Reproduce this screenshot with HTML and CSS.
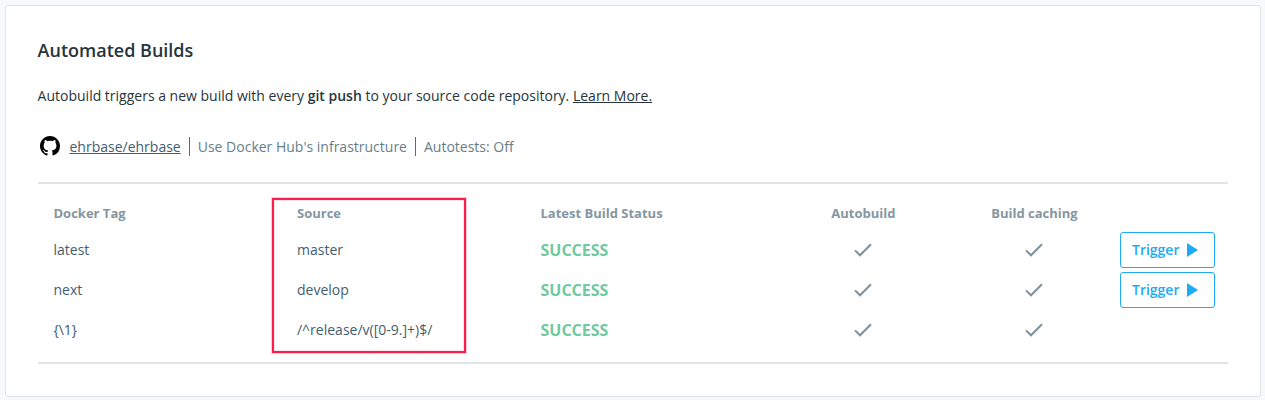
FILE: index.html
```html
<!DOCTYPE html>
<html lang="en">
<head>
<meta charset="utf-8">
<title>Automated Builds</title>
<link rel="stylesheet" href="styles.css">
</head>
<body>
<svg class="symbols" aria-hidden="true">
  <symbol id="check" viewBox="0 0 18 14"><path d="M1 7.4 L6 12.3 L17 1.2" fill="none" stroke="currentColor" stroke-width="2"/></symbol>
  <symbol id="play" viewBox="0 0 11 14"><path d="M0 0 L11 7 L0 14 Z" fill="currentColor"/></symbol>
</svg>
<main class="card">
  <h1 class="title">Automated Builds</h1>
  <p class="intro">Autobuild triggers a new build with every <strong>git push</strong> to your source code repository. <a class="learn" href="#">Learn More.</a></p>
  <div class="meta">
    <svg class="github" viewBox="0 0 16 16"><path fill="#000" d="M8 0C3.58 0 0 3.58 0 8c0 3.54 2.29 6.53 5.47 7.59.4.07.55-.17.55-.38 0-.19-.01-.82-.01-1.49-2.01.37-2.53-.49-2.69-.94-.09-.23-.48-.94-.82-1.13-.28-.15-.68-.52-.01-.53.63-.01 1.08.58 1.23.82.72 1.21 1.87.87 2.33.66.07-.52.28-.87.51-1.07-1.78-.2-3.64-.89-3.64-3.95 0-.87.31-1.59.82-2.15-.08-.2-.36-1.02.08-2.12 0 0 .67-.21 2.2.82.64-.18 1.32-.27 2-.27s1.36.09 2 .27c1.53-1.04 2.2-.82 2.2-.82.44 1.1.16 1.92.08 2.12.51.56.82 1.27.82 2.15 0 3.07-1.87 3.75-3.65 3.95.29.25.54.73.54 1.48 0 1.07-.01 1.93-.01 2.2 0 .21.15.46.55.38A8.01 8.01 0 0 0 16 8c0-4.42-3.58-8-8-8z"/></svg>
    <a class="repo" href="#">ehrbase/ehrbase</a>
    <span class="meta-item">Use Docker Hub's infrastructure</span>
    <span class="meta-item">Autotests: Off</span>
  </div>
  <section class="builds">
    <div class="row head"><span>Docker Tag</span><span>Source</span><span>Latest Build Status</span><span class="center">Autobuild</span><span class="center">Build caching</span></div>
    <div class="row"><span>latest</span><span>master</span><span class="status">SUCCESS</span><span class="center"><svg class="check"><use href="#check"/></svg></span><span class="center"><svg class="check"><use href="#check"/></svg></span><button class="trigger">Trigger<svg class="play"><use href="#play"/></svg></button></div>
    <div class="row"><span>next</span><span>develop</span><span class="status">SUCCESS</span><span class="center"><svg class="check"><use href="#check"/></svg></span><span class="center"><svg class="check"><use href="#check"/></svg></span><button class="trigger">Trigger<svg class="play"><use href="#play"/></svg></button></div>
    <div class="row"><span>{\1}</span><span>/^release/v([0-9.]+)$/</span><span class="status">SUCCESS</span><span class="center"><svg class="check"><use href="#check"/></svg></span><span class="center"><svg class="check"><use href="#check"/></svg></span></div>
    <div class="highlight"></div>
  </section>
</main>
</body>
</html>
```
FILE: styles.css
```css
* { box-sizing: border-box; }
body {
  margin: 0;
  padding: 5px 4px 3px 5px;
  height: 400px;
  overflow: hidden;
  background: #f7f8fa;
  font: 14px/20px "Open Sans", "Noto Sans", sans-serif;
  color: #27343b;
}
.symbols { display: none; }
.card {
  height: 392px;
  padding: 32px 32px 32px 31.6px;
  background: #fff;
  border: 1px solid #e0e4e7;
  border-radius: 3px;
}
.title { margin: 0; font-size: 18px; line-height: 24px; font-weight: 600; }
.intro { margin: 24px 0 0; }
.intro strong { font-weight: 600; }
.learn { color: inherit; }
.meta {
  display: flex;
  align-items: flex-start;
  height: 20px;
  margin-top: 31px;
  padding-left: 2.4px;
  color: #677e89;
}
.github { width: 20px; height: 20px; margin: -1px 9.5px 0 0; }
.repo { color: #445d6e; }
.meta-item {
  margin-left: 8px;
  padding-left: 8px;
  height: 19px;
  line-height: 20px;
  border-left: 1px solid #556f7c;
}
.builds {
  position: relative;
  height: 182px;
  margin: 25px 0 0 0.4px;
  padding: 12px 0 0 15.5px;
  border-top: 2px solid #e0e4e7;
  border-bottom: 2px solid #e0e4e7;
}
.row {
  display: grid;
  grid-template-columns: 243.5px 243.5px 237.4px 171px 171.1px 95px;
  align-items: center;
  height: 40px;
  color: #445d6e;
}
.head { height: 34px; font-size: 13px; font-weight: 700; color: #8496a2; }
.center { display: flex; justify-content: center; }
.status { font-size: 16px; font-weight: 700; color: #6fca9f; }
.check { width: 18px; height: 14px; color: #7d909b; }
.trigger {
  display: flex;
  align-items: center;
  height: 36px;
  padding: 0 11px;
  gap: 8px;
  font: inherit;
  font-weight: 600;
  color: #1caaf9;
  background: #fff;
  border: 1px solid #1caaf9;
  border-radius: 3px;
}
.play { width: 11px; height: 14px; }
.highlight {
  position: absolute;
  left: 234px;
  top: 14px;
  width: 194px;
  height: 155px;
  border: 2px solid #fb1d4c;
  box-shadow: 0 0 0 1px #fb1d4c38, inset 0 0 0 1px #fb1d4c20;
}
```
